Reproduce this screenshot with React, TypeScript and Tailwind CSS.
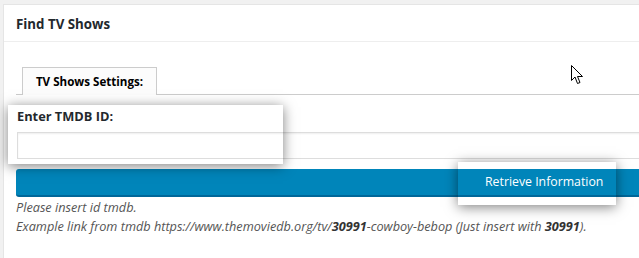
export default function App() {
  return (
    <div className="min-h-screen bg-[#f1f1f1] pt-[4px] pl-[3px] overflow-hidden" style={{ fontFamily: '"Open Sans", "Noto Sans", sans-serif' }}>
      <div className="relative min-h-[254px] bg-white border border-r-0 border-b-0 border-[#e5e5e5]">
        {/* Header */}
        <h2 className="h-[37px] px-3 pt-[4px] flex items-center text-[13.3px] font-bold text-[#23282d] border-b border-[#eee]">
          Find TV Shows
        </h2>

        <div className="pl-3">
          {/* Tabs */}
          <div className="mt-[25px] flex border-b border-[#ccc]">
            <div className="ml-[6px] -mb-px w-[135px] h-[28px] flex items-center justify-center bg-[#fcfcfc] border border-b-0 border-[#ccc] text-[11.6px] font-bold text-black">
              TV Shows Settings:
            </div>
          </div>

          {/* Field */}
          <label className="block mt-[12px] pl-px text-[12.8px] leading-[18px] font-bold text-[#23282d]">Enter TMDB ID:</label>
          <input className="block mt-[7px] ml-px w-full h-[27px] border border-r-0 border-[#ddd] shadow-[inset_0_1px_2px_rgba(0,0,0,0.07)] outline-none" />

          {/* Button */}
          <button className="mt-[10px] w-full h-[28px] flex items-center bg-[#0085ba] border-b-2 border-[#006799] text-white text-[12.3px] rounded-l-[3px]">
            <span className="ml-[469px]">Retrieve Information</span>
          </button>

          {/* Help */}
          <div className="mt-[1px] text-[12.7px] leading-[19px] italic text-[#555]">
            <p>Please insert id tmdb.</p>
            <p>
              Example link from tmdb https://www.themoviedb.org/tv/<b className="text-[#333]">30991</b>-cowboy-bebop (Just insert with{' '}
              <b className="text-[#333]">30991</b>).
            </p>
          </div>
        </div>

        {/* Screenshot highlight boxes */}
        <div className="pointer-events-none absolute left-[4px] top-[100px] w-[275px] h-[59px] shadow-[0_2px_12px_rgba(0,0,0,0.5)]" />
        <div className="pointer-events-none absolute left-[454px] top-[157px] w-[158px] h-[43px] shadow-[0_2px_12px_rgba(0,0,0,0.5)]" />

        {/* Cursor */}
        <svg className="absolute left-[567px] top-[60px]" width="13" height="20" viewBox="0 0 13 20">
          <path d="M0.5 0.5 L0.5 15.5 L4 12 L6.5 18.5 L9 17.5 L6.5 11.5 L11.5 11.5 Z" fill="white" stroke="black" strokeWidth="1" strokeLinejoin="miter" />
        </svg>
      </div>
    </div>
  );
}
